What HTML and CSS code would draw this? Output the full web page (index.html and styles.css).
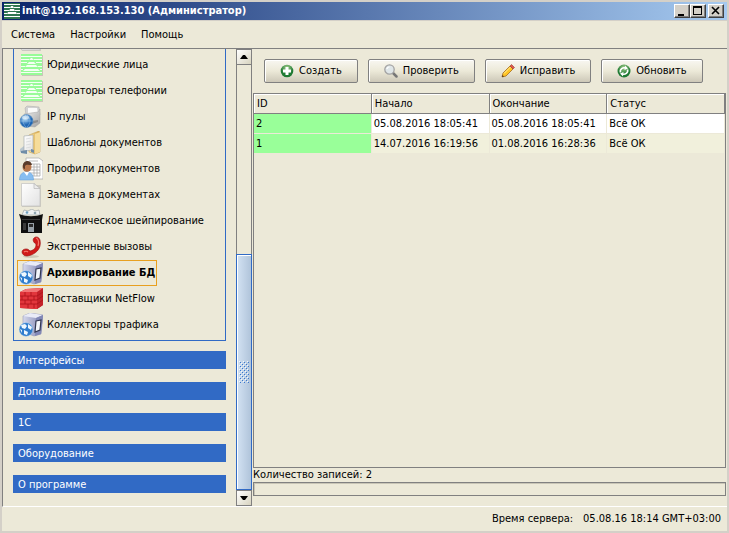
FILE: index.html
```
<!DOCTYPE html>
<html lang="ru">
<head>
    <meta charset="UTF-8">
    <meta name="viewport" content="width=device-width, initial-scale=1.0">
    <title>init@192.168.153.130 (Администратор)</title>
    <link rel="stylesheet" href="styles.css">
</head>
<body>
    <!-- Иконки -->
    <svg class="sprite" aria-hidden="true">
        <defs>
            <linearGradient id="gServer" x1="0" x2="1"><stop offset="0" stop-color="#d5d8ec"/><stop offset="1" stop-color="#7c82b0"/></linearGradient>
            <radialGradient id="gGlobe" cx=".4" cy=".3"><stop offset="0" stop-color="#b8e0fa"/><stop offset="1" stop-color="#1f66b4"/></radialGradient>
            <linearGradient id="gFolder" x1="0" x2="1"><stop offset="0" stop-color="#f8e2a0"/><stop offset="1" stop-color="#d6a447"/></linearGradient>
            <linearGradient id="gPaper" x1="0" y1="0" x2="1" y2="1"><stop offset="0" stop-color="#fff"/><stop offset="1" stop-color="#e2e2e2"/></linearGradient>
            <linearGradient id="gPrinter" x1="0" y1="0" x2="1" y2="1"><stop offset="0" stop-color="#f4f4f4"/><stop offset="1" stop-color="#a0a0a0"/></linearGradient>
            <radialGradient id="gGreen" cx=".5" cy=".25"><stop offset="0" stop-color="#a6d08c"/><stop offset="1" stop-color="#1f7a34"/></radialGradient>
            <pattern id="pGrip" width="4" height="4" patternUnits="userSpaceOnUse">
                <path fill="#f4f9ff" d="M0 0h1v1H0zM2 2h1v1H2z"/>
                <path fill="#3a78cf" d="M1 1h1v1H1zM3 3h1v1H3z"/>
            </pattern>
        </defs>
        <symbol id="lines" viewBox="-2 -1 24 24">
            <path fill="#c8c6b8" d="M1 1h21v21H1z"/>
            <path fill="#98fb98" d="M0 0h21v21H0z"/>
            <path fill="#f4fff4" d="M0 2h21v1H0zM0 5h8v1H0zM13 5h8v1h-8zM0 8h6v1H0zM15 8h6v1h-6zM0 12h4v1H0zM17 12h4v1h-4zM0 15h2v1H0zM19 15h2v1h-2zM0 18h21v1H0z"/>
            <path fill="#f4fff4" d="M10 4h1l2 2H8zM8 8h5l2 2H6zM6 11h9l2 2H4zM4 15h13l2 2H2z"/>
        </symbol>
        <symbol id="lines-dark" viewBox="0 0 16 16">
            <path fill="#2f7650" d="M0 0h16v16H0z"/>
            <path stroke="#fff" d="M0 1.500h16M0 4.500h6M10 4.500h6M0 7.500h5M11 7.500h5M0 10.500h3M13 10.500h3M0 13.500h16"/>
            <path fill="#fff" d="M7 3h2l1 2H6zM6 6h4l1 2H5zM4 9h8l1 2H3z"/>
        </symbol>
        <symbol id="ip" viewBox="0 0 24 24">
            <path fill="#d2d2d2" stroke="#a8a8a8" stroke-width=".5" d="M6 3l2-2 12 1 1 8H7z"/>
            <path fill="#fafafa" d="M9 3h9l1 6H9z"/>
            <path fill="url(#gPrinter)" stroke="#a2a2a2" stroke-width=".5" d="M5 9l14-2 2-3v14l-5 4-9-1z"/>
            <path fill="#8e8e8e" d="M13 16l6-1v2l-6 2z"/>
            <circle cx="7.500" cy="16" r="6.500" fill="url(#gGlobe)" stroke="#5588b8" stroke-width=".6"/>
            <path fill="none" stroke="#b5d8f2" stroke-width=".4" d="M1 16h13M7 10c-4 4-4 8 0 12M8 10c4 4 4 8 0 12"/>
            <ellipse cx="6.500" cy="12.500" rx="3.500" ry="2" fill="#fff" opacity=".5"/>
        </symbol>
        <symbol id="folder" viewBox="0 0 24 24">
            <path fill="url(#gFolder)" stroke="#c49a48" stroke-width=".5" d="M10 4l10-4 1 2v19l-5 2-6-2z"/>
            <path fill="#f5dc9a" d="M16 3l5-2v20l-5 2z"/>
            <path fill="#b9c6d0" d="M1 18l4-3v7l-4-1z"/>
            <path fill="url(#gPaper)" stroke="#a0a6aa" stroke-width=".6" d="M5 5l9-1v15l-9 1z"/>
            <path stroke="#cdd0d2" stroke-width=".6" d="M7 8l5-1M7 11l5-1M7 14l5-1M7 17l5-1"/>
            <path fill="#6f8da8" d="M2 20l6-1v4l-6-1zM12 18l3 1v3l-3-1z"/>
        </symbol>
        <symbol id="profile" viewBox="0 0 24 24">
            <path fill="#fff" stroke="#b0b0b0" stroke-width=".8" d="M7 1h13l4 3v18H7z"/>
            <path fill="none" stroke="#a9a9a9" stroke-width=".8" d="M10 4h9M11 7h10M11 10h10M11 13h10M11 16h10M11 19h10M15 7v12M18 7v12M21 7v12"/>
            <ellipse cx="8" cy="10" rx="4.500" ry="5" fill="#b9774b"/>
            <path fill="#5a3c2a" d="M4 10c-1-7 8-8 9-2-3 0-6-1-7 1v3c-1 0-2-1-2-2z"/>
            <path fill="#86bdf0" stroke="#5c9bd8" stroke-width=".5" d="M.5 23c0-6 3-8 7-8s7 2 7 8z"/>
            <path fill="#fff" d="M5 15h5l-2 4z"/>
        </symbol>
        <symbol id="page" viewBox="0 0 24 24">
            <path fill="#cfccc0" d="M3 2h19v22H3z"/>
            <path fill="url(#gPaper)" stroke="#c0c0c0" stroke-width=".7" d="M2.500.5H15l6 5V23H2.500z"/>
            <path fill="#ececec" stroke="#b8b8b8" stroke-width=".7" d="M15 .5V5.500h6z"/>
        </symbol>
        <symbol id="bin" viewBox="0 0 24 24">
            <path fill="#eef2f4" stroke="#8e979c" stroke-width=".6" d="M3 6l2-5 4 1 4-2 3 2 4-1 1 5z"/>
            <circle cx="8" cy="3.500" r="1.300" fill="#6fa0c0"/><circle cx="16" cy="4" r="1.300" fill="#8fa6b2"/>
            <path fill="#101010" d="M0 5c8 3 16 3 24 0l-1 6v13H2V11z"/>
            <path fill="#3a3a3a" d="M3 10h18v1H3zM4 14h3v7H4z"/>
            <path fill="#98a1a8" d="M9 14h6v9H9z"/><path fill="#2b2b2b" d="M10 15h4v3h-4z"/>
        </symbol>
        <symbol id="phone" viewBox="0 0 24 24">
            <ellipse cx="12" cy="21.500" rx="8" ry="1.500" fill="#cfc9b8"/>
            <path fill="#d01a1a" stroke="#960c0c" stroke-width=".6" d="M15 3c2-2 5-1 6 2 2 9-5 15-13 16-3 0-5-2-5-4 0-3 5-4 7-2l1 1c4-1 6-3 6-7-2-1-4-4-2-6z"/>
            <path fill="none" stroke="#f4776a" stroke-width="1.200" d="M17 3c3 1 3 5 2 8M5 17c1-1 3-1 4 0"/>
        </symbol>
        <symbol id="db" viewBox="0 0 24 24">
            <path fill="url(#gServer)" stroke="#888db2" stroke-width=".5" d="M4 3l7-3 13 2-2 19-7 2-11-4z"/>
            <path fill="#e9ebf7" d="M4 3l7-3 13 2-7 3z"/>
            <path fill="#8288b6" d="M17 5l7-3-2 19-6 2z"/>
            <path fill="#f3f5fa" stroke="#333850" stroke-width="1.200" d="M17 8l5-1-1 10-5 2z"/>
            <circle cx="7" cy="16.500" r="6.800" fill="#2f7dcd" stroke="#9cc8ee" stroke-width=".5"/>
            <path fill="#eef8ff" d="M2 12l4-1 2 2-2 3-3-1zM9 11l4 3-1 3-3-2zM5 17l4 2-1 3-3-1zM1 16l2 1v3z"/>
        </symbol>
        <symbol id="wall" viewBox="0 0 24 24">
            <path fill="#c01c24" d="M1 5l6-3 17-1v17l-6 4-17-1z"/>
            <path fill="#e2363c" d="M1 5h17v17L1 21z"/>
            <path fill="#c4222a" d="M18 5l6-4v17l-6 4z"/>
            <path fill="#f27474" d="M1 5l6-3 17-1-6 4z"/>
            <path fill="none" stroke="#b0141c" stroke-width=".9" d="M1 9h17l6-4M1 13h17l6-4M1 17h17l6-4M6 5v4M12 5v4M3 9v4M9 9v4M15 9v4M6 13v4M12 13v4M9 17v4M15 17v4"/>
        </symbol>
        <symbol id="plus" viewBox="0 0 14 14">
            <circle cx="7" cy="7" r="6.300" fill="url(#gGreen)"/>
            <path fill="#fff" d="M5.500 3h3v2.500H11v3H8.500V11h-3V8.500H3v-3h2.500z"/>
        </symbol>
        <symbol id="loupe" viewBox="0 0 14 14">
            <path stroke="#777" stroke-width="2.500" stroke-linecap="round" d="M9 9l3.500 3.500"/>
            <circle cx="5.500" cy="5.500" r="4.700" fill="#dfe6e8" stroke="#a3a3a3" stroke-width="1.300"/>
            <path fill="none" stroke="#fff" stroke-width="1.200" d="M3 5c0-1 1-2 2.500-2"/>
        </symbol>
        <symbol id="pencil" viewBox="0 0 14 14">
            <path fill="#ffc524" stroke="#9a5b12" stroke-width=".7" d="M1 13l1-4 7-7 3 3-7 7z"/>
            <path stroke="#fff09a" d="M3 9.500l6.500-6.500"/>
            <path fill="#e0574c" stroke="#9b3a30" stroke-width=".6" d="M9 2l1.500-1.500 3 3L12 5z"/>
            <path fill="#4d3117" d="M1 13l.5-2L3 12.500z"/>
        </symbol>
        <symbol id="refresh" viewBox="0 0 14 14">
            <circle cx="7" cy="7" r="6.500" fill="url(#gGreen)"/>
            <path fill="none" stroke="#fff" stroke-width="1.600" d="M3.500 8.500C2.500 5 6 3 8.500 4M10.500 5.500c1 3.500-2.500 5.500-5 4.500"/>
            <path fill="#fff" d="M8 1.500l3 3-3.500 1.500zM6 12.500l-3-3L6.500 8z"/>
        </symbol>
    </svg>

    <header class="title-bar">
        <svg class="title-icon"><use href="#lines-dark"/></svg>
        <h1>init@192.168.153.130 (Администратор)</h1>
        <div class="window-buttons">
            <button type="button" aria-label="Свернуть"><svg viewBox="0 0 12 10"><path d="M2 8h6v2H2z"/></svg></button>
            <button type="button" aria-label="Развернуть"><svg viewBox="0 0 12 10"><path fill-rule="evenodd" d="M1 0h9v9H1zM2 2v6h7V2z"/></svg></button>
            <button type="button" class="close" aria-label="Закрыть"><svg viewBox="0 0 12 10"><path fill="none" stroke="#000" stroke-width="1.600" d="M2 1l7 7M9 1L2 8"/></svg></button>
        </div>
    </header>

    <nav class="menu-bar">
        <a href="#">Система</a>
        <a href="#">Настройки</a>
        <a href="#">Помощь</a>
    </nav>

    <main class="workspace">
        <aside class="sidebar">
            <div class="sidebar-content">
                <ul class="group">
                    <li><a href="#" aria-label="Справочники"><svg><use href="#page"/></svg></a></li>
                    <li><a href="#"><svg><use href="#lines"/></svg>Юридические лица</a></li>
                    <li><a href="#"><svg><use href="#lines"/></svg>Операторы телефонии</a></li>
                    <li><a href="#"><svg><use href="#ip"/></svg>IP пулы</a></li>
                    <li><a href="#"><svg><use href="#folder"/></svg>Шаблоны документов</a></li>
                    <li><a href="#"><svg><use href="#profile"/></svg>Профили документов</a></li>
                    <li><a href="#"><svg><use href="#page"/></svg>Замена в документах</a></li>
                    <li><a href="#"><svg><use href="#bin"/></svg>Динамическое шейпирование</a></li>
                    <li><a href="#"><svg><use href="#phone"/></svg>Экстренные вызовы</a></li>
                    <li><a href="#" class="active"><svg><use href="#db"/></svg>Архивирование БД</a></li>
                    <li><a href="#"><svg><use href="#wall"/></svg>Поставщики NetFlow</a></li>
                    <li><a href="#"><svg><use href="#db"/></svg>Коллекторы трафика</a></li>
                </ul>
                <div class="sections">
                    <button type="button">Интерфейсы</button>
                    <button type="button">Дополнительно</button>
                    <button type="button">1С</button>
                    <button type="button">Оборудование</button>
                    <button type="button">О программе</button>
                </div>
            </div>
            <div class="scrollbar">
                <button type="button" aria-label="Вверх"><svg viewBox="0 0 8 4"><path d="M3 0h2l3 4H0z"/></svg></button>
                <div class="track"></div>
                <div class="thumb"><svg class="grip"><path fill="url(#pGrip)" d="M0 0h10v22H0z"/></svg></div>
                <button type="button" aria-label="Вниз"><svg viewBox="0 0 8 4"><path d="M0 0h8L5 4H3z"/></svg></button>
            </div>
        </aside>

        <section class="content">
            <div class="toolbar">
                <button type="button"><svg><use href="#plus"/></svg>Создать</button>
                <button type="button"><svg><use href="#loupe"/></svg>Проверить</button>
                <button type="button"><svg><use href="#pencil"/></svg>Исправить</button>
                <button type="button"><svg><use href="#refresh"/></svg>Обновить</button>
            </div>
            <div class="table-pane">
                <table>
                    <thead>
                        <tr><th>ID</th><th>Начало</th><th>Окончание</th><th>Статус</th></tr>
                    </thead>
                    <tbody>
                        <tr><td class="id">2</td><td>05.08.2016 18:05:41</td><td>05.08.2016 18:05:41</td><td>Всё ОК</td></tr>
                        <tr><td class="id">1</td><td>14.07.2016 16:19:56</td><td>01.08.2016 16:28:36</td><td>Всё ОК</td></tr>
                    </tbody>
                </table>
            </div>
            <div class="count">Количество записей: 2</div>
            <div class="progress"></div>
        </section>
    </main>

    <footer class="status-bar">
        <span>Время сервера:</span>
        <span>05.08.16 18:14 GMT+03:00</span>
    </footer>
</body>
</html>
```
FILE: styles.css
```
* {
    box-sizing: border-box;
}

body {
    margin: 0;
    height: 100vh;
    display: flex;
    flex-direction: column;
    background: #ece9d8;
    border: 2px solid #d4d0c8;
    color: #000;
    font: 11px/14px Tahoma, "DejaVu Sans Condensed", "DejaVu Sans", sans-serif;
    overflow: hidden;
}

a {
    color: inherit;
    text-decoration: none;
}

button {
    font: inherit;
    color: inherit;
    padding: 0;
    border-radius: 0;
}

.sprite {
    position: absolute;
    width: 0;
    height: 0;
}

/* Заголовок окна */
.title-bar {
    flex: none;
    display: flex;
    align-items: center;
    height: 19px;
    padding: 0 3px 0 2px;
    background: linear-gradient(to right, #0a246a, #a6caf0);
    border-bottom: 1px solid #d4d0c8;
}

.title-icon {
    width: 16px;
    height: 16px;
}

h1 {
    flex: 1;
    margin: 0 0 0 2px;
    font-size: 11px;
    color: #fff;
}

.window-buttons {
    display: flex;
}

.window-buttons button {
    display: flex;
    width: 16px;
    height: 14px;
    padding: 1px;
    background: #d4d0c8;
    border: 1px solid;
    border-color: #fff #404040 #404040 #fff;
    box-shadow: inset -1px -1px #808080;
}

.window-buttons svg {
    width: 12px;
    height: 10px;
}

.window-buttons .close {
    margin-left: 2px;
}

/* Меню */
.menu-bar {
    flex: none;
    display: flex;
    align-items: center;
    gap: 15px;
    height: 27px;
    padding: 0 9px;
}

/* Рабочая область */
.workspace {
    flex: 1;
    min-height: 0;
    display: flex;
    border-top: 1px solid #808080;
    border-left: 1px solid #808080;
    border-bottom: 1px solid #fff;
}

.sidebar {
    flex: none;
    display: flex;
    width: 249px;
}

.sidebar-content {
    flex: 1;
    display: flex;
    flex-direction: column;
    justify-content: flex-end;
    padding: 0 10px 13px;
    overflow: hidden;
}

.group {
    margin: 0 0 10px;
    padding: 3px 3px 2px;
    list-style: none;
    border: 1px solid #316ac5;
}

.group li {
    display: flex;
}

.group a {
    display: flex;
    align-items: center;
    gap: 4px;
    height: 26px;
    padding: 0 1px;
    border: 1px solid transparent;
    white-space: nowrap;
}

.group a.active {
    border-color: #e8a020;
    font-weight: bold;
}

.group svg {
    width: 24px;
    height: 24px;
}

.sections {
    display: flex;
    flex-direction: column;
    gap: 13px;
}

.sections button {
    height: 18px;
    padding: 2px 5px 0;
    border: 0;
    background: #316ac5;
    color: #fff;
    text-align: left;
}

/* Полоса прокрутки */
.scrollbar {
    flex: none;
    display: flex;
    flex-direction: column;
    width: 16px;
}

.scrollbar button {
    flex: none;
    display: flex;
    align-items: center;
    justify-content: center;
    height: 16px;
    background: linear-gradient(135deg, #fff, #d8d4c0);
    border: 1px solid #808080;
}

.scrollbar button svg {
    width: 8px;
    height: 4px;
}

.track {
    flex: 189;
    border: solid #808080;
    border-width: 0 1px;
}

.thumb {
    flex: 235;
    display: flex;
    align-items: center;
    justify-content: center;
    background: linear-gradient(to right, #d3e2f3, #b0c4da);
    border: 1px solid #316ac5;
    box-shadow: inset 1px 1px #fff;
}

.grip {
    width: 10px;
    height: 22px;
}

/* Правая часть */
.content {
    flex: 1;
    min-width: 0;
    display: flex;
    flex-direction: column;
    padding: 0 1px 10px;
}

.toolbar {
    flex: none;
    display: flex;
    gap: 10px;
    padding: 10px 11px;
}

.toolbar button {
    display: flex;
    align-items: center;
    gap: 5px;
    height: 24px;
    padding: 0 15px;
    background: linear-gradient(to bottom, #f8f7f1, #ece9d8 50%, #cdc8b8);
    border: 1px solid #808080;
    border-radius: 2px;
    box-shadow: inset 1px 1px #fff;
    white-space: nowrap;
}

.toolbar svg {
    width: 14px;
    height: 14px;
}

.table-pane {
    flex: 1;
    border: 1px solid #808080;
}

table {
    width: 100%;
    table-layout: fixed;
    border-collapse: separate;
    border-spacing: 0;
}

th {
    height: 20px;
    padding: 0 3px;
    border-right: 1px solid #808080;
    border-bottom: 1px solid #808080;
    box-shadow: inset 1px 1px #fff;
    font-weight: normal;
    text-align: left;
}

td {
    height: 20px;
    padding: 0 2px;
    background: #fff;
    border-right: 1px solid #ece9d8;
    border-bottom: 1px solid #ece9d8;
    white-space: nowrap;
}

tbody tr:nth-child(even) td {
    background: #f1f0dc;
}

tbody tr td.id {
    background: #9f9;
}

.count {
    flex: none;
    height: 14px;
}

.progress {
    flex: none;
    height: 14px;
    border: 1px solid #808080;
    box-shadow: inset 1px 1px #c8c5b6;
}

/* Строка состояния */
.status-bar {
    flex: none;
    display: flex;
    align-items: center;
    justify-content: flex-end;
    gap: 10px;
    height: 24px;
    padding: 0 6px;
}
```
